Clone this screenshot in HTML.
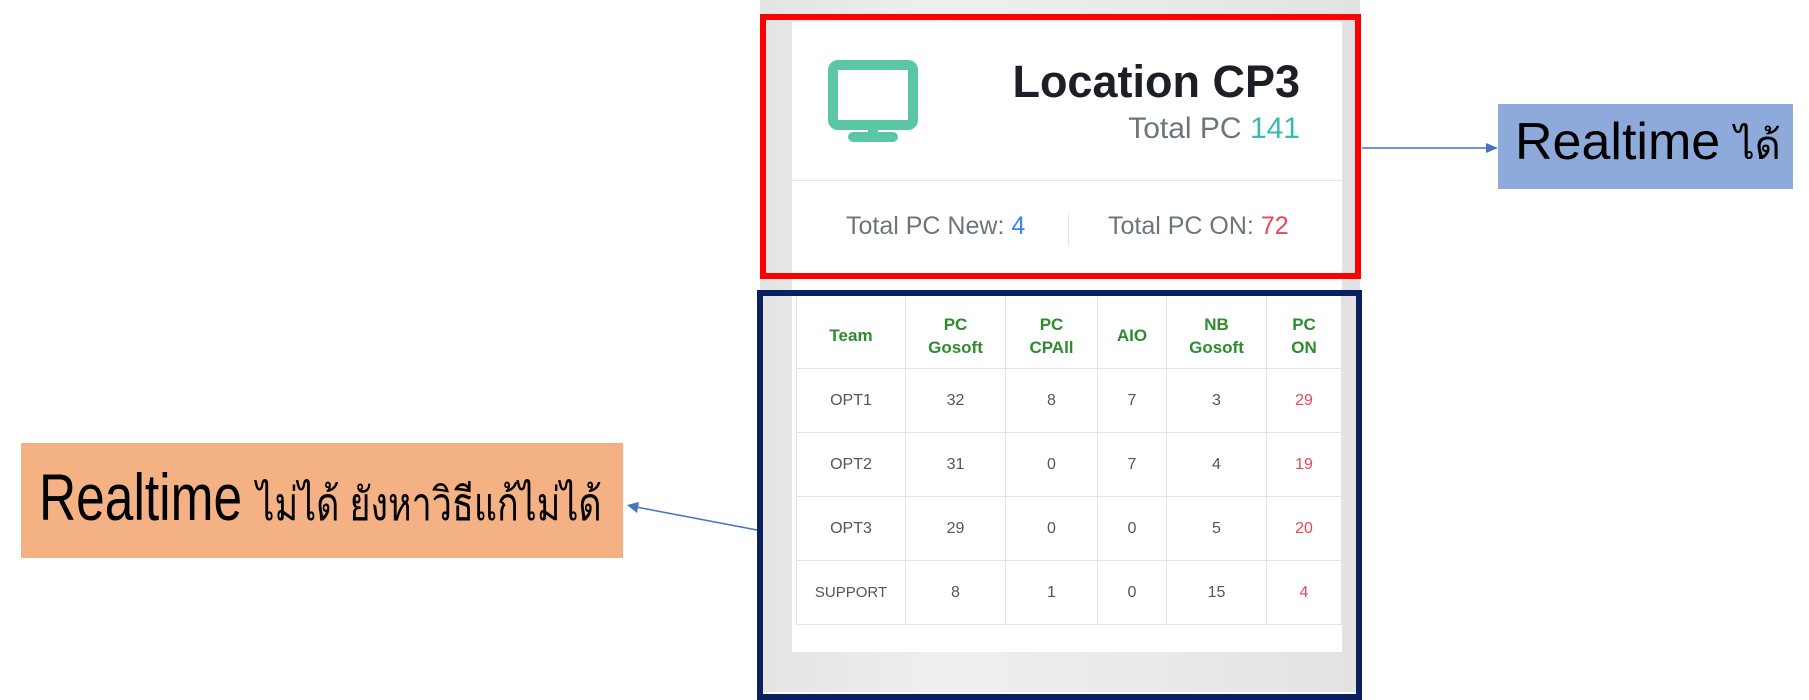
<!DOCTYPE html>
<html><head><meta charset="utf-8"><style>
*{margin:0;padding:0;box-sizing:border-box}
body{width:1809px;height:692px;position:relative;background:#fff;overflow:hidden;font-family:"Liberation Sans","Noto Sans CJK SC",sans-serif}
.a{position:absolute}
.panel{left:760px;top:0;width:600px;height:692px;background:linear-gradient(90deg,#e4e4e4,#efefef 30%,#e9e9e9 70%,#e2e2e2)}
.card{left:792px;top:22px;width:550px;height:630px;background:#fff}
table{position:absolute;left:796px;top:292px;border-collapse:collapse;font-size:16px;color:#555;text-align:center}
td,th{border:1px solid #e3e3e3;height:64px}
th{color:#2e8b2e;font-weight:bold;font-size:17px;height:76px;line-height:23px;padding-top:10px}
.r{color:#e8465f}
</style></head><body>
<div class="a panel"></div>
<div class="a card"></div>
<svg class="a" style="left:828px;top:60px" width="92" height="84" viewBox="0 0 92 84">
<rect x="5" y="5" width="80" height="60" rx="5" fill="none" stroke="#5bc6a5" stroke-width="10"/>
<rect x="40" y="66" width="10" height="10" fill="#5bc6a5"/>
<rect x="20" y="72" width="50" height="10" rx="5" fill="#5bc6a5"/>
</svg>
<div class="a" style="right:509px;top:56px;font-size:45px;font-weight:bold;color:#1c1f26;white-space:nowrap">Location CP3</div>
<div class="a" style="right:509px;top:112px;font-size:30px;color:#6c757d;white-space:nowrap">Total PC <span style="color:#3bb8b0">141</span></div>
<div class="a" style="left:792px;top:180px;width:550px;height:1px;background:#e5e5e5"></div>
<div class="a" style="left:846px;top:212px;font-size:25px;color:#6c757d;white-space:nowrap">Total PC New: <span style="color:#3b82f6">4</span></div>
<div class="a" style="left:1068px;top:213px;width:1px;height:33px;background:#e5e5e5"></div>
<div class="a" style="left:1108px;top:212px;font-size:25px;color:#6c757d;white-space:nowrap">Total PC ON: <span style="color:#e8465f">72</span></div>
<table>
<tr><th style="width:109px">Team</th><th style="width:100px">PC<br>Gosoft</th><th style="width:92px">PC<br>CPAll</th><th style="width:69px">AIO</th><th style="width:100px">NB<br>Gosoft</th><th style="width:75px">PC<br>ON</th></tr>
<tr><td>OPT1</td><td>32</td><td>8</td><td>7</td><td>3</td><td class="r">29</td></tr>
<tr><td>OPT2</td><td>31</td><td>0</td><td>7</td><td>4</td><td class="r">19</td></tr>
<tr><td>OPT3</td><td>29</td><td>0</td><td>0</td><td>5</td><td class="r">20</td></tr>
<tr><td style="font-size:15px">SUPPORT</td><td>8</td><td>1</td><td>0</td><td>15</td><td class="r">4</td></tr>
</table>
<div class="a" style="left:760px;top:14px;width:601px;height:265px;border:6px solid #f00"></div>
<div class="a" style="left:757px;top:290px;width:605px;height:410px;border:6px solid #0b2060"></div>
<svg class="a" style="left:0;top:0" width="1809" height="692">
<line x1="1362" y1="148" x2="1488" y2="148" stroke="#4472c4" stroke-width="1.5"/>
<polygon points="1498,148 1486,143 1486,153" fill="#4472c4"/>
<line x1="757" y1="530" x2="636" y2="507" stroke="#4472c4" stroke-width="1.5"/>
<polygon points="627,505 639,502 637,513" fill="#4472c4"/>
</svg>
<div class="a" style="left:1498px;top:104px;width:295px;height:85px;background:#8eaadb"></div>
<div class="a" style="left:1515px;top:116px;font-size:52px;line-height:52px;color:#000;white-space:nowrap">Realtime <span style="font-size:40px">ได้</span></div>
<div class="a" style="left:21px;top:443px;width:602px;height:115px;background:#f4b183"></div>
<div class="a" style="left:39px;top:464px;font-size:66px;line-height:66px;color:#000;white-space:nowrap;transform:scaleX(0.78);transform-origin:left">Realtime <span style="font-size:46px">ไม่ได้ ยังหาวิธีแก้ไม่ได้</span></div>
</body></html>
